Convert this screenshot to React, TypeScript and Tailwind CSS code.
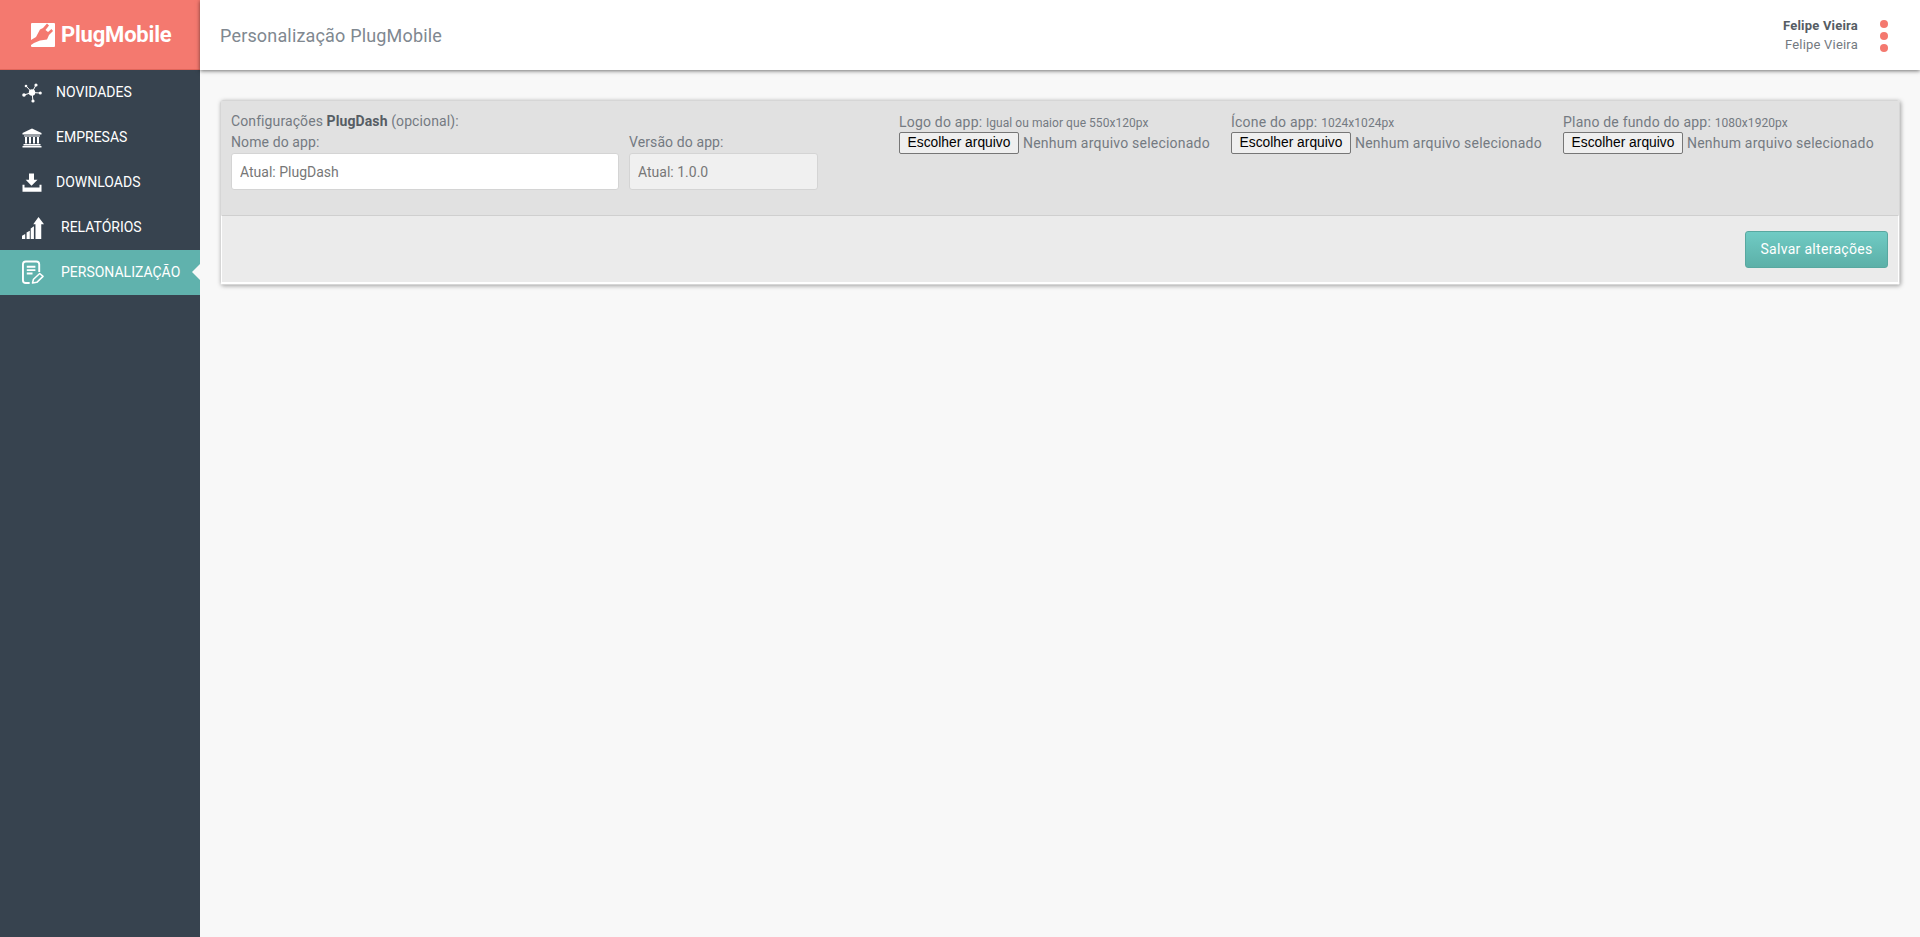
import type { ReactNode } from 'react'

function LogoMark() {
  return (
    <svg width="24" height="24" viewBox="0 0 24 24" className="shrink-0">
      <rect width="24" height="24" rx="1" fill="white" />
      <path
        fill="#f4796f"
        d="M0 17 L5 14 L9 6.5 L12 5 L16 0.5 L18 2.5 L14.5 7 L17 9 L20.5 6 L22 8 L18 12 L16 16.5 L9 17.5 L3 20 L0 22 Z"
      />
    </svg>
  )
}

function NetIcon() {
  return (
    <svg width="20" height="20" viewBox="0 0 20 20" fill="white" stroke="white">
      <line x1="10" y1="9.5" x2="2" y2="12" strokeWidth="1" />
      <line x1="10" y1="9.5" x2="4" y2="3" strokeWidth="1" />
      <line x1="10" y1="9.5" x2="14" y2="2" strokeWidth="1" />
      <line x1="10" y1="9.5" x2="18" y2="10" strokeWidth="1" />
      <line x1="10" y1="9.5" x2="11" y2="18" strokeWidth="1" />
      <circle cx="10" cy="9.5" r="3.2" stroke="none" />
      <circle cx="2" cy="12" r="1.8" stroke="none" />
      <circle cx="4" cy="3" r="1.3" stroke="none" />
      <circle cx="14" cy="2" r="1.6" stroke="none" />
      <circle cx="18.3" cy="10" r="1.5" stroke="none" />
      <circle cx="11" cy="18" r="1.6" stroke="none" />
    </svg>
  )
}

function BankIcon() {
  return (
    <svg width="20" height="20" viewBox="0 0 20 20" fill="white">
      <path d="M10 0.5 L19.5 5 V6.5 H0.5 V5 Z" />
      <path d="M2 7.5 H18 V8.5 H2 Z" />
      <path d="M3 9 H5 V15.5 H3 Z M7 9 H9 V15.5 H7 Z M11 9 H13 V15.5 H11 Z M15 9 H17 V15.5 H15 Z" />
      <path d="M1.5 16 H18.5 V17.5 H1.5 Z M0.5 18 H19.5 V19.5 H0.5 Z" />
    </svg>
  )
}

function DownloadIcon() {
  return (
    <svg width="20" height="19" viewBox="0 0 20 19" fill="white">
      <path d="M7 0.5 H12 V6.7 H15.5 L9.5 12.7 L3.7 6.7 H7 Z" />
      <path d="M0.5 11.7 H2.5 V14.5 H17.5 V11.7 H19.5 V18.7 H0.5 Z" />
    </svg>
  )
}

function ChartIcon() {
  return (
    <svg width="24" height="24" viewBox="0 0 24 24" fill="white">
      <path d="M0 20.5 L3.5 18.5 V24 H0 Z" />
      <path d="M5 17 L8.5 15 V24 H5 Z" />
      <path d="M9.5 12.5 L13 10 V24 H9.5 Z" />
      <path d="M18 0 L24 8 H21 V24 H14.7 V8 H12.3 Z" />
    </svg>
  )
}

function NoteIcon() {
  return (
    <svg width="23" height="25" viewBox="0 0 23 25" fill="none" stroke="white" strokeWidth="2">
      <path d="M8 23.5 H4 Q1 23.5 1 20.5 V4 Q1 1 4 1 H15 Q18 1 18 4 V12" />
      <path d="M5 6.5 H14 M5 10 H14 M5 13.5 H11" />
      <path d="M11 23.5 L12 19.5 L18.5 13.5 L22 16.5 L15.5 22.8 Z" strokeWidth="1.6" strokeLinejoin="round" />
    </svg>
  )
}

function NavItem({ icon, label, active, textClass }: { icon: ReactNode; label: string; active?: boolean; textClass: string }) {
  return (
    <div className={`relative flex h-[45px] items-center text-[14px] text-white ${active ? 'bg-[#60b2ad]' : ''}`}>
      <div className="ml-[22px] flex w-[22px] items-center">{icon}</div>
      <span className={textClass}>{label}</span>
      {active && (
        <div className="absolute right-0 top-[14px] h-0 w-0 border-y-[8px] border-r-[8px] border-y-transparent border-r-[#f8f8f8]" />
      )}
    </div>
  )
}

function FileField({ label, hint }: { label: string; hint: string }) {
  return (
    <div className="w-[332px]">
      <div className="h-[23px] pt-[3px] text-[14px] leading-[20px] tracking-[0.2px] whitespace-nowrap">
        {label} <span className="text-[12px] tracking-[0.05px]">{hint}</span>
      </div>
      <div className="flex items-center whitespace-nowrap text-[14px] tracking-[0.22px]">
        <button className="h-[22px] w-[120px] rounded-[2px] border border-[#767676] bg-[#efefef] font-['Liberation_Sans',sans-serif] text-[13.8px] tracking-normal text-black">
          Escolher arquivo
        </button>
        <span className="ml-[4px]">Nenhum arquivo selecionado</span>
      </div>
    </div>
  )
}

export default function App() {
  return (
    <div className="flex h-[937px] overflow-hidden bg-[#f8f8f8] font-['Roboto',sans-serif] text-[#747a81]">
      <aside className="w-[200px] shrink-0 bg-[#37434f]">
        <div className="flex h-[70px] items-center border-b border-[#e0655a] bg-[#f4796f] pl-[31px]">
          <LogoMark />
          <span className="ml-[6px] text-[22px] font-bold leading-none tracking-[-0.2px] text-white">PlugMobile</span>
        </div>
        <NavItem icon={<NetIcon />} label="NOVIDADES" textClass="ml-[12px]" />
        <NavItem icon={<BankIcon />} label="EMPRESAS" textClass="ml-[12px]" />
        <NavItem icon={<DownloadIcon />} label="DOWNLOADS" textClass="ml-[12px]" />
        <NavItem icon={<ChartIcon />} label="RELATÓRIOS" textClass="ml-[17px]" />
        <NavItem icon={<NoteIcon />} label="PERSONALIZAÇÃO" textClass="ml-[17px]" active />
      </aside>
      <div className="flex min-w-0 flex-1 flex-col">
        <header className="z-10 flex h-[70px] items-center justify-between bg-white pl-[20px] pr-[32px] shadow-[0_1px_4px_rgba(0,0,0,0.55)]">
          <div className="text-[18px] tracking-[0.17px] text-[#808890]">Personalização PlugMobile</div>
          <div className="flex items-center gap-[22px]">
            <div className="text-right text-[13px] leading-[19px] tracking-[0.2px]">
              <div className="font-bold text-[#565d64]">Felipe Vieira</div>
              <div>Felipe Vieira</div>
            </div>
            <div className="mt-[2px] flex flex-col gap-[4px]">
              <div className="h-[8px] w-[8px] rounded-full bg-[#f4796f]" />
              <div className="h-[8px] w-[8px] rounded-full bg-[#f4796f]" />
              <div className="h-[8px] w-[8px] rounded-full bg-[#f4796f]" />
            </div>
          </div>
        </header>
        <main className="px-[20px] pt-[30px]">
          <section className="rounded-[3px] border border-[#d6d6d6] shadow-[1px_1px_4px_rgba(0,0,0,0.35)]">
            <div className="flex h-[114px] bg-[#e1e1e1] pl-[10px] pt-[10px]">
              <div className="w-[668px] shrink-0">
                <div className="h-[21px] text-[14px] leading-[20px] tracking-[0.1px]">
                  Configurações <b className="text-[#565d64]">PlugDash</b> (opcional):
                </div>
                <div className="flex gap-[10px]">
                  <div className="w-[388px]">
                    <div className="h-[21px] text-[14px] leading-[20px] tracking-[0.1px]">Nome do app:</div>
                    <input
                      placeholder="Atual: PlugDash"
                      className="h-[37px] w-full rounded-[3px] border border-[#d4d4d4] bg-white px-[8px] text-[14px] placeholder:text-[#777]"
                    />
                  </div>
                  <div className="w-[189px]">
                    <div className="h-[21px] text-[14px] leading-[20px] tracking-[0.1px]">Versão do app:</div>
                    <input
                      disabled
                      placeholder="Atual: 1.0.0"
                      className="h-[37px] w-full rounded-[3px] border border-[#d4d4d4] bg-[#f0f0f0] px-[8px] text-[14px] placeholder:text-[#777]"
                    />
                  </div>
                </div>
              </div>
              <div className="mt-[-2px] flex">
                <FileField label="Logo do app:" hint="Igual ou maior que 550x120px" />
                <FileField label="Ícone do app:" hint="1024x1024px" />
                <FileField label="Plano de fundo do app:" hint="1080x1920px" />
              </div>
            </div>
            <div className="flex h-[69px] items-center justify-end border-x border-t border-b-2 border-x-white border-t-[#cfcfcf] border-b-white bg-[#ebebeb] pr-[10px]">
              <button className="h-[37px] w-[143px] rounded-[3px] border border-[#58a8a0] bg-gradient-to-b from-[#70cbc4] to-[#5cb0a8] text-[14px] tracking-[0.3px] text-white">
                Salvar alterações
              </button>
            </div>
          </section>
        </main>
      </div>
    </div>
  )
}
